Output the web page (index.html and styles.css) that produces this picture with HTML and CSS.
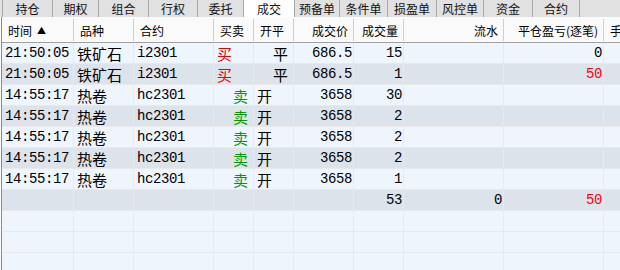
FILE: index.html
```html
<!DOCTYPE html>
<html lang="zh-CN">
<head>
<meta charset="utf-8">
<link rel="stylesheet" href="styles.css">
</head>
<body>
<div class="app">
  <div class="tabs">
    <div class="tab">持仓</div>
    <div class="tab">期权</div>
    <div class="tab">组合</div>
    <div class="tab">行权</div>
    <div class="tab">委托</div>
    <div class="tab active">成交</div>
    <div class="tab">预备单</div>
    <div class="tab">条件单</div>
    <div class="tab">损盈单</div>
    <div class="tab">风控单</div>
    <div class="tab">资金</div>
    <div class="tab">合约</div>
  </div>
  <div class="table">
    <div class="row head">
      <div class="c l">时间 <span class="sort">▲</span></div>
      <div class="c l">品种</div>
      <div class="c l">合约</div>
      <div class="c l">买卖</div>
      <div class="c l">开平</div>
      <div class="c r">成交价</div>
      <div class="c r">成交量</div>
      <div class="c r">流水</div>
      <div class="c r">平仓盈亏(逐笔)</div>
      <div class="c l">手续费</div>
    </div>

    <div class="row odd">
      <div class="c num">21:50:05</div>
      <div class="c cn">铁矿石</div>
      <div class="c num">i2301</div>
      <div class="c cn buy">买</div>
      <div class="c cn ind">平</div>
      <div class="c num r">686.5</div>
      <div class="c num r">15</div>
      <div class="c num r"></div>
      <div class="c num r">0</div>
      <div class="c"></div>
    </div>
    <div class="row even">
      <div class="c num">21:50:05</div>
      <div class="c cn">铁矿石</div>
      <div class="c num">i2301</div>
      <div class="c cn buy">买</div>
      <div class="c cn ind">平</div>
      <div class="c num r">686.5</div>
      <div class="c num r">1</div>
      <div class="c num r"></div>
      <div class="c num r red">50</div>
      <div class="c"></div>
    </div>
    <div class="row odd">
      <div class="c num">14:55:17</div>
      <div class="c cn">热卷</div>
      <div class="c num">hc2301</div>
      <div class="c cn sell">卖</div>
      <div class="c cn">开</div>
      <div class="c num r">3658</div>
      <div class="c num r">30</div>
      <div class="c num r"></div>
      <div class="c num r"></div>
      <div class="c"></div>
    </div>
    <div class="row even">
      <div class="c num">14:55:17</div>
      <div class="c cn">热卷</div>
      <div class="c num">hc2301</div>
      <div class="c cn sell">卖</div>
      <div class="c cn">开</div>
      <div class="c num r">3658</div>
      <div class="c num r">2</div>
      <div class="c num r"></div>
      <div class="c num r"></div>
      <div class="c"></div>
    </div>
    <div class="row odd">
      <div class="c num">14:55:17</div>
      <div class="c cn">热卷</div>
      <div class="c num">hc2301</div>
      <div class="c cn sell">卖</div>
      <div class="c cn">开</div>
      <div class="c num r">3658</div>
      <div class="c num r">2</div>
      <div class="c num r"></div>
      <div class="c num r"></div>
      <div class="c"></div>
    </div>
    <div class="row even">
      <div class="c num">14:55:17</div>
      <div class="c cn">热卷</div>
      <div class="c num">hc2301</div>
      <div class="c cn sell">卖</div>
      <div class="c cn">开</div>
      <div class="c num r">3658</div>
      <div class="c num r">2</div>
      <div class="c num r"></div>
      <div class="c num r"></div>
      <div class="c"></div>
    </div>
    <div class="row odd">
      <div class="c num">14:55:17</div>
      <div class="c cn">热卷</div>
      <div class="c num">hc2301</div>
      <div class="c cn sell">卖</div>
      <div class="c cn">开</div>
      <div class="c num r">3658</div>
      <div class="c num r">1</div>
      <div class="c num r"></div>
      <div class="c num r"></div>
      <div class="c"></div>
    </div>
    <div class="row even">
      <div class="c"></div>
      <div class="c"></div>
      <div class="c"></div>
      <div class="c"></div>
      <div class="c"></div>
      <div class="c"></div>
      <div class="c num r">53</div>
      <div class="c num r">0</div>
      <div class="c num r red">50</div>
      <div class="c"></div>
    </div>
    <div class="row odd">
      <div class="c"></div><div class="c"></div><div class="c"></div><div class="c"></div><div class="c"></div>
      <div class="c"></div><div class="c"></div><div class="c"></div><div class="c"></div><div class="c"></div>
    </div>
    <div class="row odd">
      <div class="c"></div><div class="c"></div><div class="c"></div><div class="c"></div><div class="c"></div>
      <div class="c"></div><div class="c"></div><div class="c"></div><div class="c"></div><div class="c"></div>
    </div>
    <div class="row odd">
      <div class="c"></div><div class="c"></div><div class="c"></div><div class="c"></div><div class="c"></div>
      <div class="c"></div><div class="c"></div><div class="c"></div><div class="c"></div><div class="c"></div>
    </div>
  </div>
</div>
</body>
</html>
```

FILE: styles.css
```css
html, body {
  margin: 0;
  padding: 0;
  width: 620px;
  height: 270px;
  overflow: hidden;
  background: #ffffff;
}

.app {
  width: 620px;
  height: 270px;
  overflow: hidden;
  font-family: "Noto Sans CJK SC", "Noto Sans", sans-serif;
  color: #000;
}

.tabs {
  display: flex;
  height: 17px;
  padding-left: 2px;
  background: #e1e1e1;
}

.tab {
  box-sizing: border-box;
  height: 17px;
  border-right: 1px solid #a8a8a8;
  font-size: 12px;
  line-height: 17px;
  text-align: center;
  color: #111;
  flex: none;
}

.tab:nth-child(1) { width: 51px; border-left: 1px solid #a8a8a8; }
.tab:nth-child(2) { width: 46px; }
.tab:nth-child(3) { width: 50px; }
.tab:nth-child(4) { width: 49px; }
.tab:nth-child(5) { width: 46px; }
.tab:nth-child(6) { width: 51px; }
.tab:nth-child(7) { width: 45px; }
.tab:nth-child(8) { width: 48px; }
.tab:nth-child(9) { width: 49px; }
.tab:nth-child(10) { width: 47px; }
.tab:nth-child(11) { width: 49px; }
.tab:nth-child(12) { width: 47px; }

.tab.active {
  background: #ffffff;
}

.table {
  margin-left: 1px;
  border-left: 1px solid #8a8a8a;
}

.row {
  display: grid;
  grid-template-columns: 72px 60px 80px 40px 40px 60px 50px 100px 100px 120px;
  box-sizing: border-box;
  height: 21px;
  border-bottom: 1px solid #e9e9ec;
}

.row.head {
  height: 26px;
  background: #fafafa;
  border-bottom: 1px solid #a0a0a0;
}

.row.odd { background: #eff5fd; }
.row.even { background: #dde3eb; }

.c {
  box-sizing: border-box;
  border-right: 1px solid #e9e9ec;
  display: flex;
  align-items: center;
  white-space: nowrap;
  overflow: hidden;
  padding-left: 3px;
  padding-right: 1px;
}

.row.head .c {
  border-right: 1px solid #cfcfcf;
  font-size: 12px;
  padding-left: 6px;
  padding-right: 5px;
  margin: 2px 0 1px;
}

.row.head .c.r { justify-content: flex-end; }

.sort {
  font-size: 9px;
  margin-left: 5px;
}

.c.r { justify-content: flex-end; }

.num {
  font-family: "Liberation Mono", monospace;
  font-size: 14px;
  letter-spacing: -0.4px;
}

.num.r { padding-right: 1px; }

.cn {
  font-size: 15px;
}

.buy { color: #ee0000; }
.sell { color: #009a00; padding-left: 19px; }
.ind { padding-left: 19px; }
.red { color: #ff0000; }
```
